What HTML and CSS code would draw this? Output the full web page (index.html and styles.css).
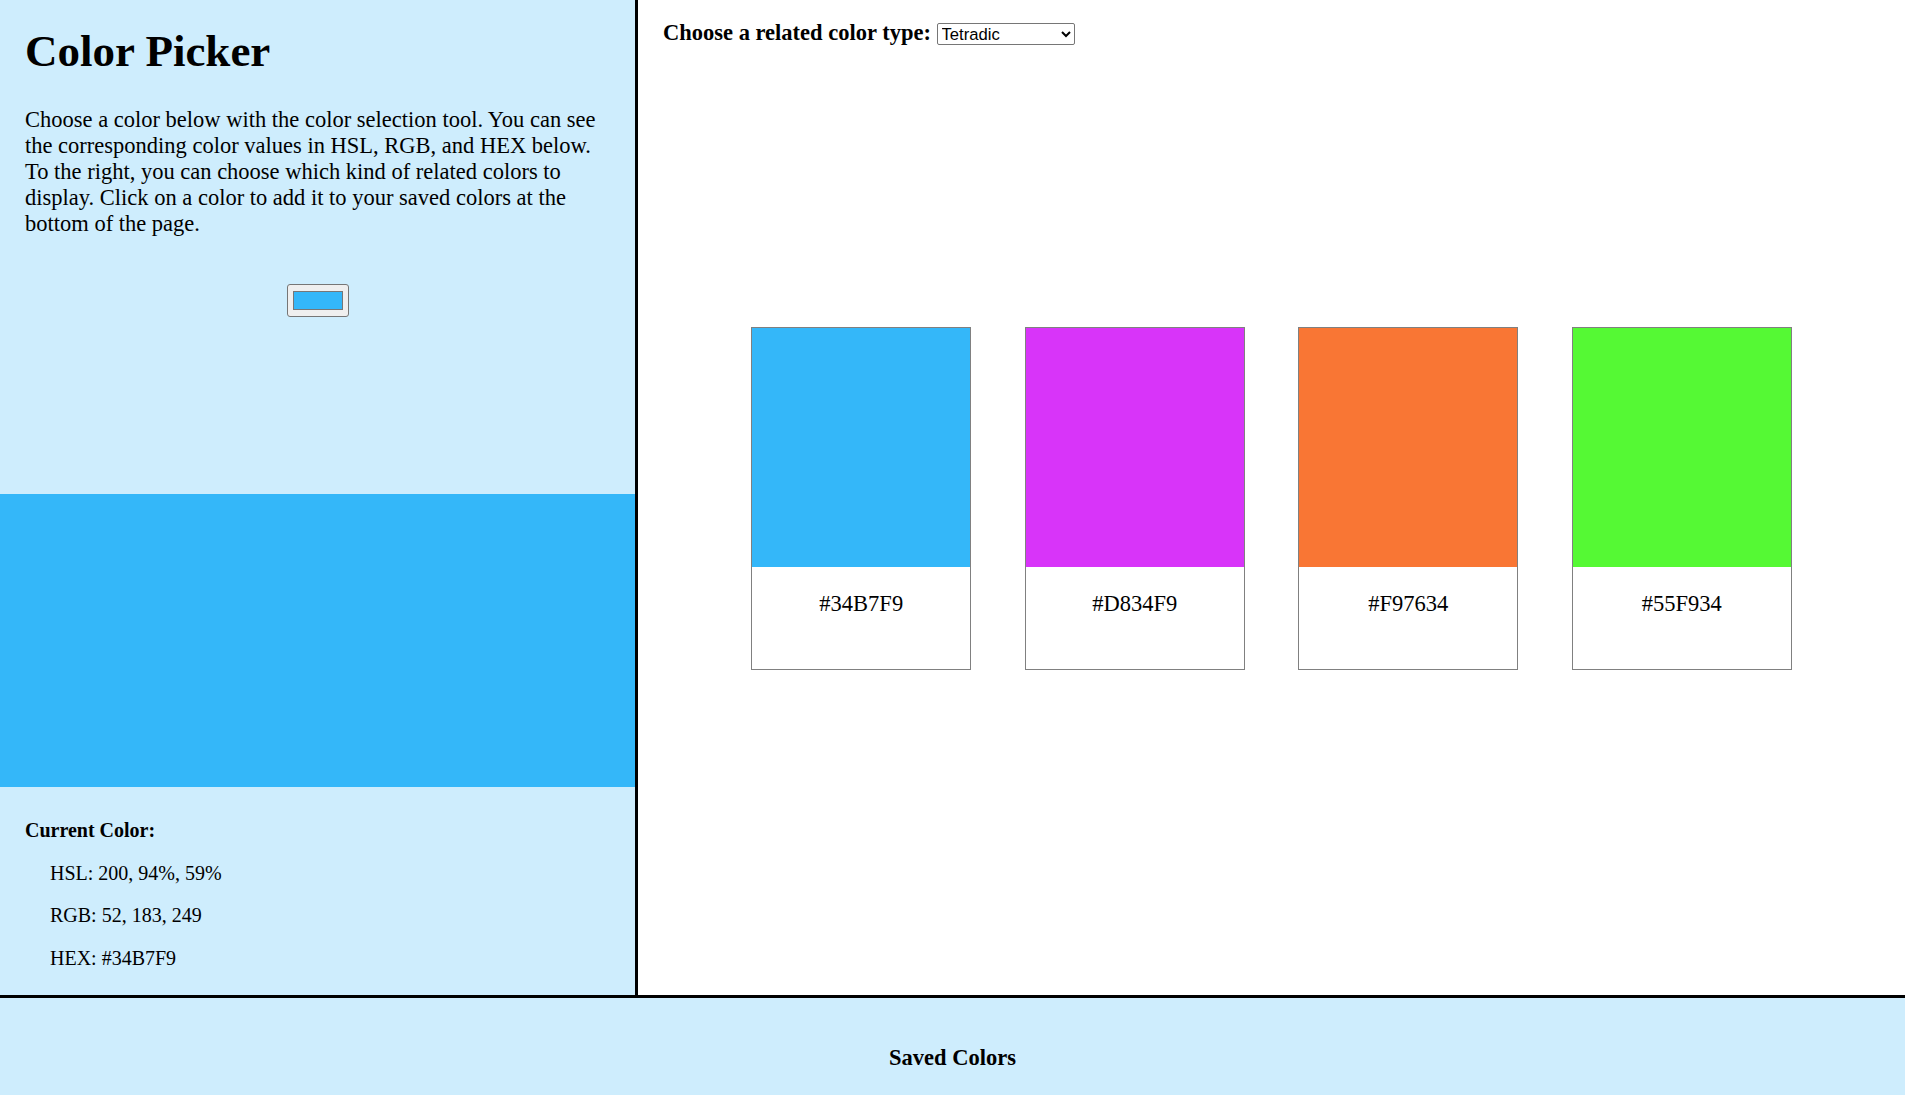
FILE: index.html
```html
<!DOCTYPE html>
<html lang="en">
<head>
<meta charset="utf-8">
<title>Color Picker</title>
<link rel="stylesheet" href="styles.css">
</head>
<body>
<div class="main">
  <section class="picker-panel">
    <div class="intro">
      <h1 class="title">Color Picker</h1>
      <p class="desc">Choose a color below with the color selection tool. You can see the corresponding color values in HSL, RGB, and HEX below. To the right, you can choose which kind of related colors to display. Click on a color to add it to your saved colors at the bottom of the page.</p>
      <div class="input-row"><input class="color-input" type="color" value="#34b7f9"></div>
    </div>
    <div class="current-swatch"></div>
    <div class="info">
      <p class="info-title">Current Color:</p>
      <p class="info-line">HSL: 200, 94%, 59%</p>
      <p class="info-line">RGB: 52, 183, 249</p>
      <p class="info-line">HEX: #34B7F9</p>
    </div>
  </section>
  <section class="related-panel">
    <div class="type-row">
      <label class="type-label" for="type">Choose a related color type:</label>
      <select class="type-select" id="type">
        <option>Tetradic</option>
      </select>
    </div>
    <div class="cards">
      <div class="card"><div class="card-color c1"></div><p class="card-hex">#34B7F9</p></div>
      <div class="card"><div class="card-color c2"></div><p class="card-hex">#D834F9</p></div>
      <div class="card"><div class="card-color c3"></div><p class="card-hex">#F97634</p></div>
      <div class="card"><div class="card-color c4"></div><p class="card-hex">#55F934</p></div>
    </div>
  </section>
</div>
<section class="saved">
  <h2 class="saved-title">Saved Colors</h2>
</section>
</body>
</html>
```
FILE: styles.css
```css
html, body {
  margin: 0;
  padding: 0;
}
body {
  font-family: "Liberation Serif", "Times New Roman", serif;
  font-size: 22.5px;
  color: #000;
  background: #ffffff;
  overflow: hidden;
}
.main {
  display: flex;
  height: 995px;
  border-bottom: 3px solid #000;
}
.picker-panel {
  width: 635px;
  flex: none;
  background: #ceedfd;
  border-right: 3px solid #000;
  display: flex;
  flex-direction: column;
}
.intro {
  padding: 25px 25px 0;
}
.title {
  font-size: 45px;
  font-weight: bold;
  margin: 0 0 30px;
}
.desc {
  margin: 0;
}
.input-row {
  margin-top: 47px;
}
.color-input {
  display: block;
  width: 62px;
  height: 33px;
  box-sizing: border-box;
  margin: 0 auto;
  padding: 1px 3px;
  border: 1px solid #767676;
  border-radius: 3px;
  background: #efefef;
  cursor: pointer;
}
.color-input::-webkit-color-swatch-wrapper {
  padding: 5px 2px;
}
.color-input::-webkit-color-swatch {
  border: 1px solid #777;
}
.current-swatch {
  margin-top: 177px;
  height: 293px;
  background: #34b7f9;
}
.info {
  padding: 0 25px;
  margin-top: 32px;
  font-size: 20px;
}
.info-title {
  margin: 0;
  font-weight: bold;
}
.info-line {
  margin: 19.5px 0 0;
  padding-left: 25px;
}
.related-panel {
  flex: 1;
  padding: 0 25px;
  background: #fff;
}
.type-row {
  padding-top: 19.5px;
}
.type-label {
  font-weight: bold;
}
.type-select {
  font-family: "Liberation Sans", Arial, sans-serif;
  font-size: 16.67px;
  width: 138px;
  height: 22px;
  box-sizing: border-box;
  margin: 0;
  border: 1px solid #767676;
  border-radius: 2px;
  background: #fff;
  color: #000;
}
.cards {
  margin-top: 281.5px;
  display: flex;
  justify-content: center;
  gap: 53.5px;
}
.card {
  width: 220px;
  box-sizing: border-box;
  border: 1px solid #808080;
  height: 343px;
  background: #fff;
}
.card-color {
  height: 239px;
}
.c1 { background: #34b7f9; }
.c2 { background: #d834f9; }
.c3 { background: #f97634; }
.c4 { background: #55f934; }
.card-hex {
  margin: 0;
  padding-top: 24px;
  text-align: center;
}
.saved {
  height: 97px;
  box-sizing: border-box;
  padding-top: 46.5px;
  background: #ceedfd;
}
.saved-title {
  margin: 0;
  font-size: 22.5px;
  font-weight: bold;
  text-align: center;
}
```
